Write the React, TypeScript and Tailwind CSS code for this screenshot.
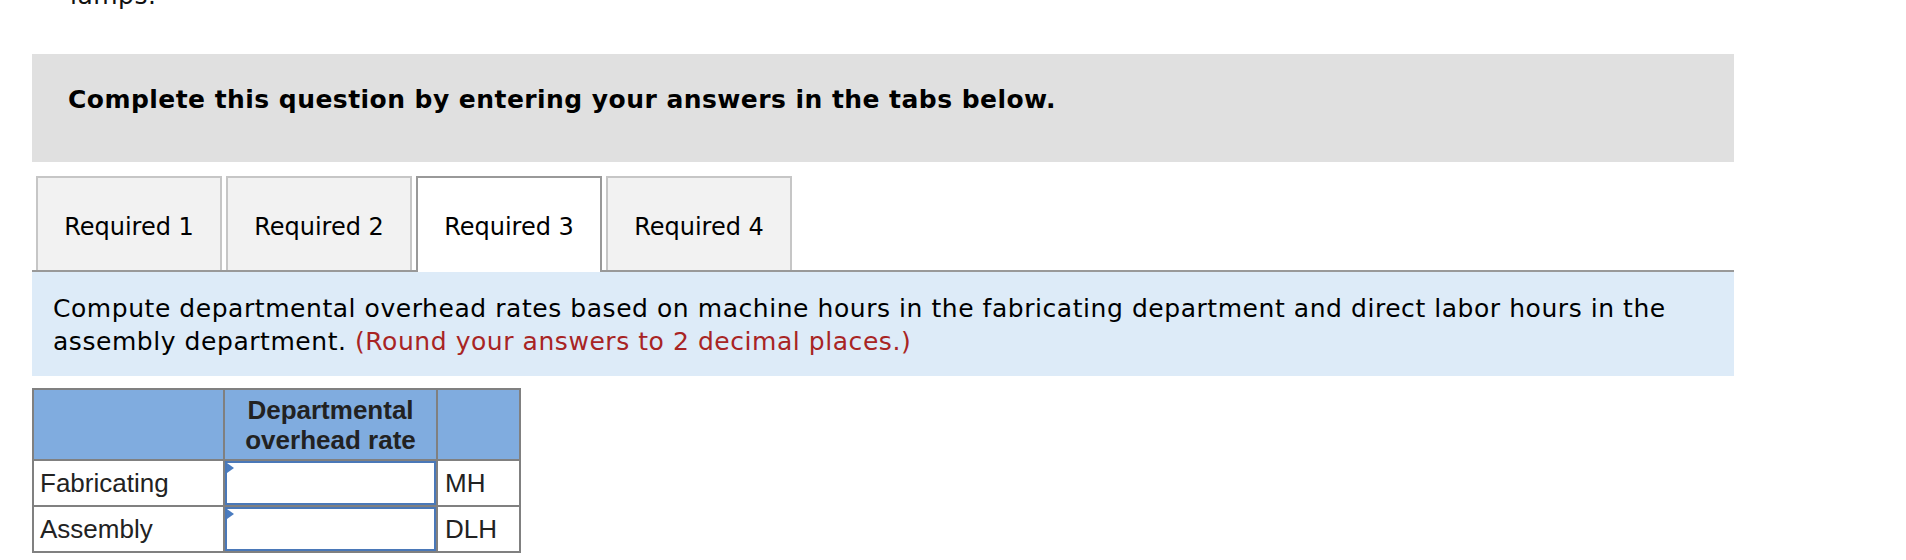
import React from "react";

const verdana = { fontFamily: '"DejaVu Sans", Verdana, sans-serif' };

function Tab({ label, active }: { label: string; active?: boolean }) {
  return (
    <div
      className={
        active
          ? "relative -mb-[2px] flex h-[96px] w-[186px] items-center justify-center border-2 border-b-0 border-[#999999] bg-white pb-[2px] pt-[5px] text-[24px] text-black"
          : "flex h-[94px] w-[186px] items-center justify-center border-2 border-b-0 border-[#c6c6c6] bg-[#f2f2f2] pt-[5px] text-[24px] text-black"
      }
    >
      {label}
    </div>
  );
}

function RateInput() {
  return (
    <div className="relative h-[44px] w-full border-2 border-[#4a78b8] bg-white">
      <svg className="absolute left-0 top-0" width="8" height="10" viewBox="0 0 8 10">
        <polygon points="0,0 7,5 0,10" fill="#4a7cc0" />
      </svg>
    </div>
  );
}

export default function App() {
  return (
    <div className="min-h-[560px] w-[1906px] overflow-hidden bg-white" style={verdana}>
      <div className="ml-[32px] w-[1702px]">
        <div className="-mt-[18px] h-[28px] pl-[38px] text-[25px] leading-[28px] tracking-[0.5px] text-[#111]">lamps.</div>

        <div className="mt-[44px] h-[108px] bg-[#e0e0e0] pl-[36px] pt-[31px]">
          <div className="text-[25px] font-bold leading-[30px] tracking-[0.45px] text-black">
            Complete this question by entering your answers in the tabs below.
          </div>
        </div>

        <div className="mt-[14px] flex items-end gap-[4px] border-b-2 border-[#999999] pl-[4px]">
          <Tab label="Required 1" />
          <Tab label="Required 2" />
          <Tab label="Required 3" active />
          <Tab label="Required 4" />
        </div>

        <div className="h-[104px] bg-[#ddebf8] pl-[21px] pr-[30px] pt-[20px] text-[25px] leading-[33px] tracking-[0.55px] text-black">
          Compute departmental overhead rates based on machine hours in the fabricating department and direct labor hours in the assembly department.{" "}
          <span className="text-[#a82424]">(Round your answers to 2 decimal places.)</span>
        </div>

        <table
          className="mt-[12px] border-collapse text-[26px] text-[#222]"
          style={{ fontFamily: '"Liberation Sans", Arial, sans-serif' }}
        >
          <tbody>
            <tr className="bg-[#80acdf]">
              <th className="h-[71px] w-[191px] border-2 border-[#808080] p-0"></th>
              <th className="w-[213px] border-2 border-[#808080] p-0 text-center text-[26px] font-bold leading-[30px] text-[#222]">
                Departmental
                <br />
                overhead rate
              </th>
              <th className="w-[83px] border-2 border-[#808080] p-0"></th>
            </tr>
            <tr>
              <td className="h-[46px] border-2 border-[#808080] px-[6px] py-0 text-left leading-[30px]">Fabricating</td>
              <td className="border-2 border-[#808080] p-0">
                <RateInput />
              </td>
              <td className="border-2 border-[#808080] px-[7px] py-0 text-left leading-[30px]">MH</td>
            </tr>
            <tr>
              <td className="h-[46px] border-2 border-[#808080] px-[6px] py-0 text-left leading-[30px]">Assembly</td>
              <td className="border-2 border-[#808080] p-0">
                <RateInput />
              </td>
              <td className="border-2 border-[#808080] px-[7px] py-0 text-left leading-[30px]">DLH</td>
            </tr>
          </tbody>
        </table>
      </div>
    </div>
  );
}
